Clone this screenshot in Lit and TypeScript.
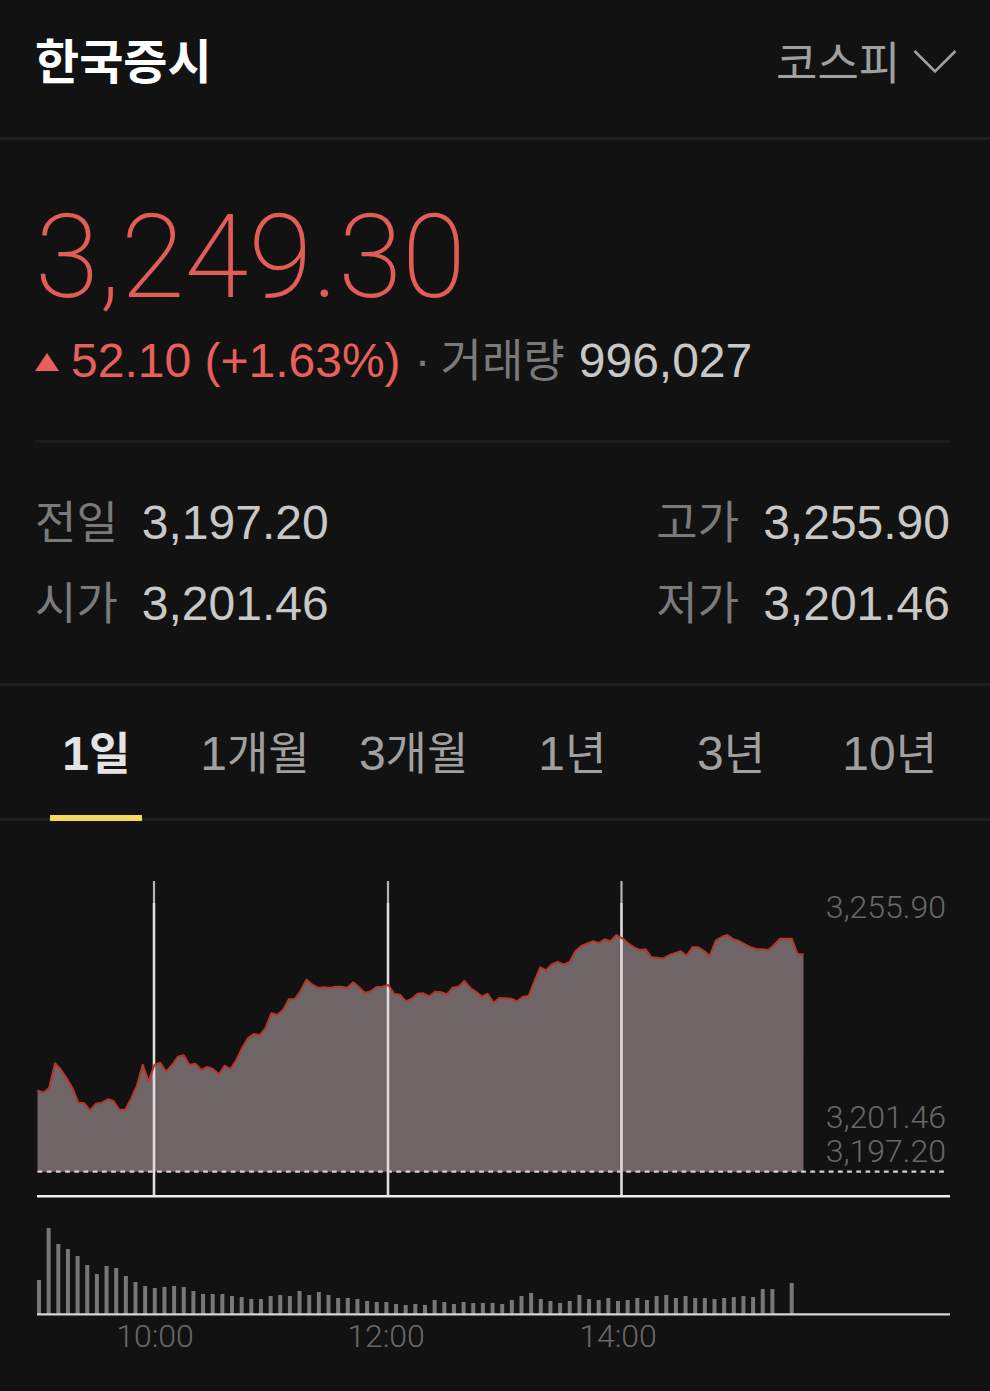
import { LitElement, html, svg, css } from "lit";
import { customElement, state } from "lit/decorators.js";
import { classMap } from "lit/directives/class-map.js";

/* Chart geometry, in user units of the chart's view box. */
const LEFT = 37.5;
const PRICE_STEP = 5.847;
const PREV_CLOSE_Y = 1171.7;
const VOLUME_BASE_Y = 1314;
const VOLUME_STEP = 9.65;
const VOLUME_LEFT = 37;

const PRICE = [
  1090.3, 1092.7, 1088, 1063.3, 1069.7, 1078.3, 1088.3, 1102.7, 1103.3, 1110.3, 1103.7, 1102.7,
  1099.3, 1101, 1109.7, 1109.7, 1098.7, 1085.7, 1064.7, 1081.3, 1065, 1062.7, 1071.7, 1065,
  1056.7, 1055.3, 1065, 1063.7, 1070, 1067, 1069, 1074.3, 1065.7, 1069, 1060.3, 1048, 1038, 1034,
  1035.3, 1028, 1013.3, 1015, 1010, 999.3, 999, 991, 979.7, 984.7, 987.7, 987.3, 988, 986.7,
  986.7, 988, 982.3, 987.3, 993, 991.3, 987, 986.7, 985, 993.7, 994.7, 1001.3, 998.7, 993.7,
  993.3, 996.3, 991.7, 992.3, 994.3, 987.7, 986.7, 981, 987.7, 991.7, 996.7, 993.7, 1002.7, 998,
  998.3, 998.7, 1001.3, 996.7, 996, 981, 967.3, 970.3, 964.3, 962, 964.7, 962, 951.3, 946, 943.7,
  941.3, 943, 939.3, 941.3, 935, 938.3, 943.3, 947.3, 950, 949.3, 957.3, 957.7, 958.7, 955.3,
  953.3, 951.3, 955.7, 947.3, 947.3, 951, 955.7, 940.7, 937, 935, 939.3, 941, 944.3, 947.3, 949.3,
  949.3, 950, 944.7, 938.7, 938.7, 938.7, 954.3, 954.3,
];

const VOLUME = [
  34, 86, 70, 65, 58, 49, 40, 48, 46, 38, 32, 28, 26, 27, 28, 27, 23, 20, 20, 20, 18, 17, 15, 15,
  18, 19, 18, 23, 19, 22, 19, 16, 16, 15, 13, 12, 12, 10, 9, 10, 9, 14, 12, 10, 12, 11, 11, 11, 10,
  14, 18, 21, 15, 13, 11, 13, 19, 15, 14, 16, 13, 14, 16, 14, 18, 19, 16, 18, 16, 16, 15, 16, 17,
  18, 17, 25, 25, 0, 31,
];

const HOURS = [
  { label: "10:00", x: 154, textX: 155 },
  { label: "12:00", x: 388, textX: 386 },
  { label: "14:00", x: 621.5, textX: 618 },
];

const LEVELS = [
  { label: "3,255.90", y: 918 },
  { label: "3,201.46", y: 1128 },
  { label: "3,197.20", y: 1162 },
];

@customElement("index-chart")
class IndexChart extends LitElement {
  static styles = css`
    :host {
      display: block;
    }
    .chart {
      display: block;
      width: 100%;
      height: auto;
    }
    .area {
      fill: #6f6466;
    }
    .curve {
      fill: none;
      stroke: #b5382c;
      stroke-width: 2;
      stroke-linejoin: round;
    }
    .hour {
      stroke: #e2dcde;
      stroke-width: 2.6;
    }
    .hour-tip {
      stroke: #b4b4b4;
      stroke-width: 2.2;
    }
    .axis {
      stroke: #f0eeee;
      stroke-width: 2.6;
    }
    .volume-axis {
      stroke: #d4d6d6;
      stroke-width: 2.4;
    }
    .prev-close {
      stroke: #d6ced0;
      stroke-width: 2.2;
      stroke-dasharray: 4.8 4.4;
    }
    .bar {
      fill: #777;
    }
    .text {
      fill: #686868;
      font-family: Roboto, sans-serif;
      font-size: 32px;
      font-weight: 300;
    }
    .level {
      text-anchor: end;
    }
    .time {
      text-anchor: middle;
    }
  `;

  render() {
    const points = PRICE.map((y, i) => `${(LEFT + i * PRICE_STEP).toFixed(1)},${y}`);
    const right = LEFT + (PRICE.length - 1) * PRICE_STEP;
    return html`
      <svg class="chart" viewBox="0 821 990 570" role="img" aria-label="코스피 1일 차트">
        <polygon
          class="area"
          points="${LEFT},${PREV_CLOSE_Y} ${points.join(" ")} ${right},${PREV_CLOSE_Y}"
        ></polygon>
        ${HOURS.map(
          (h) => svg`
            <line class="hour-tip" x1=${h.x} x2=${h.x} y1="881" y2="903"></line>
            <line class="hour" x1=${h.x} x2=${h.x} y1="903" y2="1196"></line>`
        )}
        <line class="prev-close" x1=${LEFT} x2="946" y1=${PREV_CLOSE_Y} y2=${PREV_CLOSE_Y}></line>
        <polyline class="curve" points=${points.join(" ")}></polyline>
        <line class="axis" x1="37" x2="950" y1="1196.3" y2="1196.3"></line>
        ${VOLUME.map(
          (h, i) => svg`<rect class="bar" x=${VOLUME_LEFT + i * VOLUME_STEP} width="4"
            y=${VOLUME_BASE_Y - h} height=${h}></rect>`
        )}
        <line class="volume-axis" x1="37" x2="950" y1="1314.4" y2="1314.4"></line>
        ${LEVELS.map((l) => svg`<text class="text level" x="946" y=${l.y}>${l.label}</text>`)}
        ${HOURS.map((h) => svg`<text class="text time" x=${h.textX} y="1347">${h.label}</text>`)}
      </svg>
    `;
  }
}

const STATS = [
  { name: "전일", value: "3,197.20" },
  { name: "고가", value: "3,255.90" },
  { name: "시가", value: "3,201.46" },
  { name: "저가", value: "3,201.46" },
];

const PERIODS = [
  { count: "1", unit: "일" },
  { count: "1", unit: "개월" },
  { count: "3", unit: "개월" },
  { count: "1", unit: "년" },
  { count: "3", unit: "년" },
  { count: "10", unit: "년" },
];

@customElement("app-root")
class AppRoot extends LitElement {
  static styles = css`
    :host {
      display: block;
      min-height: 100vh;
      background: #121212;
      color: #c8c8c8;
      font-family: "Liberation Sans", "Noto Sans CJK KR", sans-serif;
      font-size: 48px;
      line-height: 60px;
    }
    h1,
    p,
    dl,
    dd {
      margin: 0;
    }
    .ko {
      font-family: "Noto Sans CJK KR", sans-serif;
      font-size: 45px;
      line-height: 1;
    }
    .header {
      display: flex;
      align-items: center;
      justify-content: space-between;
      padding: 31px 33px 46px 35px;
      border-bottom: 3px solid #202020;
    }
    .title {
      padding-bottom: 6px;
      font-family: "Noto Sans CJK KR", sans-serif;
      font-size: 48px;
      font-weight: 700;
      line-height: 54px;
      color: #fff;
    }
    .market {
      display: flex;
      align-items: center;
      gap: 12px;
    }
    .select {
      appearance: none;
      margin: 0;
      padding: 0;
      border: 0;
      background: transparent;
      color: #a0a0a0;
      font-family: "Noto Sans CJK KR", sans-serif;
      font-size: 45px;
      font-weight: 400;
      line-height: 60px;
    }
    .chevron {
      width: 44px;
      height: 26px;
      margin-top: 2px;
      fill: none;
      stroke: #a0a0a0;
      stroke-width: 2.6;
    }
    .quote {
      padding: 67px 0 49px;
      margin: 0 40px 0 35px;
      border-bottom: 3px solid #1b1b1b;
    }
    .price {
      font-family: Roboto, sans-serif;
      font-size: 116px;
      font-weight: 200;
      line-height: 100px;
      color: #e35d57;
    }
    .change {
      display: flex;
      align-items: baseline;
      margin-top: 24px;
      white-space: nowrap;
    }
    .up {
      align-self: center;
      width: 24px;
      height: 19px;
      margin-right: 12px;
      fill: #ea5f59;
    }
    .delta {
      color: #e8605a;
    }
    .muted {
      color: #7a7a7a;
    }
    .dot {
      margin: 0 10px 0 14px;
    }
    .volume {
      margin-left: 14px;
    }
    .stats {
      display: grid;
      grid-template-columns: auto auto;
      justify-content: space-between;
      row-gap: 21px;
      padding: 50px 40px 49px 35px;
      border-bottom: 3px solid #202020;
    }
    .stat {
      display: flex;
      align-items: baseline;
      gap: 24px;
    }
    .tabs {
      display: grid;
      grid-template-columns: repeat(6, 1fr);
      justify-items: center;
      padding: 0 21px 0 17px;
      border-bottom: 3px solid #202020;
    }
    .tab {
      margin: 0 0 -3px;
      padding: 38px 12px 31px;
      border: 0;
      border-bottom: 6px solid transparent;
      background: transparent;
      color: #a0a0a0;
      font: inherit;
      white-space: nowrap;
      cursor: pointer;
    }
    .tab.active {
      border-bottom-color: #f3da5b;
      color: #e4e4e4;
      font-weight: 700;
    }
  `;

  @state() private active = 0;

  render() {
    return html`
      <header class="header">
        <h1 class="title">한국증시</h1>
        <label class="market">
          <select class="select" aria-label="시장 선택">
            <option>코스피</option>
          </select>
          <svg class="chevron" viewBox="0 0 44 26" aria-hidden="true">
            <path d="M1.5 2 L22 22.5 L42.5 2"></path>
          </svg>
        </label>
      </header>
      <section class="quote">
        <p class="price">3,249.30</p>
        <p class="change">
          <svg class="up" viewBox="0 0 24 19" aria-hidden="true">
            <path d="M0 19 L12 1 L24 19 Z"></path>
          </svg>
          <span class="delta">52.10 (+1.63%)</span>
          <span class="muted dot">·</span>
          <span class="muted ko">거래량</span>
          <span class="volume">996,027</span>
        </p>
      </section>
      <dl class="stats">
        ${STATS.map(
          (s) => html`<div class="stat">
            <dt class="muted ko">${s.name}</dt>
            <dd>${s.value}</dd>
          </div>`
        )}
      </dl>
      <nav class="tabs" role="tablist">
        ${PERIODS.map(
          (p, i) => html`<button
            type="button"
            role="tab"
            aria-selected=${i === this.active ? "true" : "false"}
            class=${classMap({ tab: true, active: i === this.active })}
            @click=${() => (this.active = i)}
          >${p.count}<span class="ko">${p.unit}</span></button>`
        )}
      </nav>
      <index-chart></index-chart>
    `;
  }
}
